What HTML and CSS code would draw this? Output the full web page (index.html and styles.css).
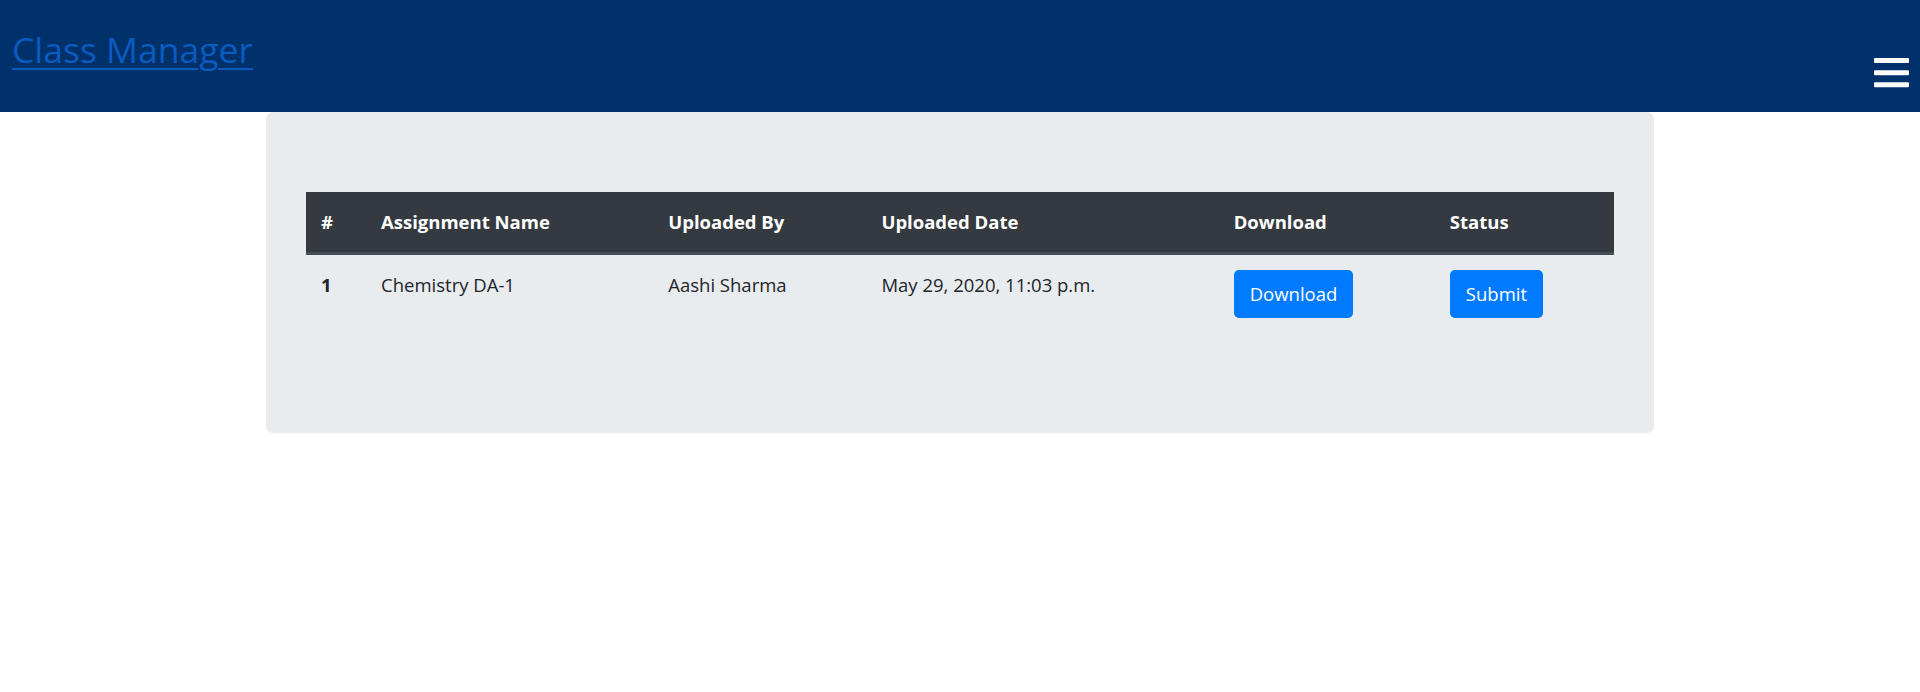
FILE: index.html
```html
<!DOCTYPE html>
<html lang="en">
<head>
<meta charset="utf-8">
<title>Class Manager</title>
<link rel="stylesheet" href="styles.css">
</head>
<body>
<nav class="navbar">
  <a class="brand" href="#">Class Manager</a>
  <button class="toggler" type="button" aria-label="Menu">
    <svg width="35" height="30" viewBox="0 0 35 30">
      <rect x="0" y="0" width="35" height="5" rx="1" fill="#fff"/>
      <rect x="0" y="12.3" width="35" height="5" rx="1" fill="#fff"/>
      <rect x="0" y="24.3" width="35" height="5" rx="1" fill="#fff"/>
    </svg>
  </button>
</nav>
<main class="container">
  <div class="jumbotron">
    <table class="table">
      <colgroup>
        <col class="c-num"><col class="c-name"><col class="c-by"><col class="c-date"><col class="c-dl"><col class="c-status">
      </colgroup>
      <thead>
        <tr>
          <th>#</th>
          <th>Assignment Name</th>
          <th>Uploaded By</th>
          <th>Uploaded Date</th>
          <th>Download</th>
          <th>Status</th>
        </tr>
      </thead>
      <tbody>
        <tr>
          <th class="row-head">1</th>
          <td>Chemistry DA-1</td>
          <td>Aashi Sharma</td>
          <td>May 29, 2020, 11:03 p.m.</td>
          <td><a class="btn" href="#">Download</a></td>
          <td><a class="btn" href="#">Submit</a></td>
        </tr>
      </tbody>
    </table>
  </div>
</main>
</body>
</html>
```
FILE: styles.css
```css
* { box-sizing: border-box; }

body {
  margin: 0;
  font-family: "Open Sans", "Noto Sans", sans-serif;
  font-size: 18.5px;
  color: #212529;
  background: #fff;
}

.navbar {
  display: flex;
  justify-content: space-between;
  align-items: flex-start;
  height: 112px;
  padding: 0 11px 0 12px;
  background: #00316b;
}

.brand {
  margin-top: 23px;
  font-size: 35.5px;
  line-height: 52px;
  color: #0a5bc0;
  text-decoration: underline;
  text-decoration-thickness: 2px;
  text-underline-offset: 5px;
}

.toggler {
  margin-top: 58px;
  padding: 0;
  border: 0;
  background: transparent;
  line-height: 0;
}

.container {
  width: 1388px;
  margin: 0 auto;
}

.jumbotron {
  padding: 80px 40px;
  background: #e9ecef;
  border-radius: 7px;
}

.table {
  width: 100%;
  margin-bottom: 20px;
  border-collapse: collapse;
  table-layout: fixed;
}

.c-num { width: 60px; }
.c-name { width: 287px; }
.c-by { width: 213px; }
.c-date { width: 352px; }
.c-dl { width: 216px; }
.c-status { width: 179px; }

.table th,
.table td {
  padding: 15px;
  line-height: 30px;
  text-align: left;
  vertical-align: top;
}

.table thead th {
  background: #343a40;
  color: #fff;
  font-weight: 700;
  border-bottom: 3px solid #454d55;
}

.row-head { font-weight: 700; }

.btn {
  display: inline-block;
  padding: 9px 16px;
  line-height: 30px;
  font-size: 18.5px;
  color: #fff;
  background: #007bff;
  border-radius: 5px;
  text-decoration: none;
  vertical-align: top;
}
```
